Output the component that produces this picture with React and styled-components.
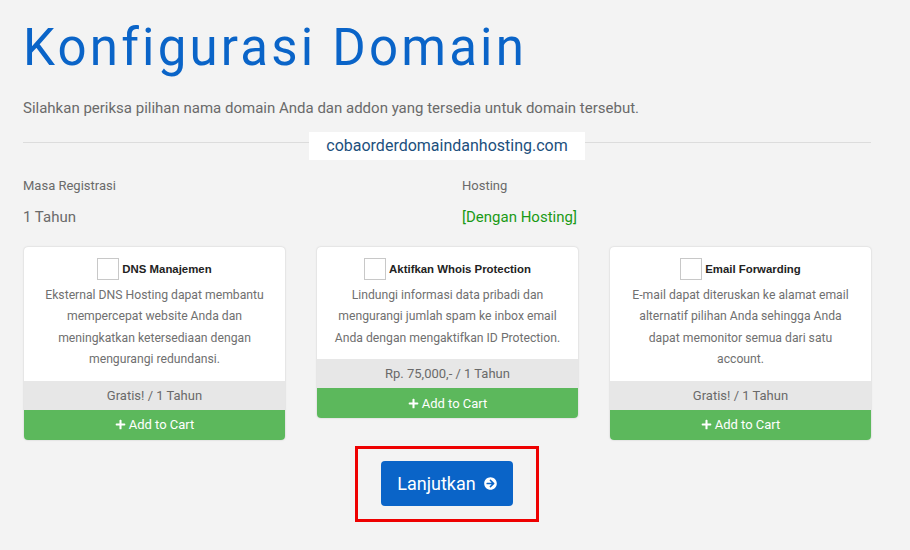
import React from "react";
import styled, { createGlobalStyle } from "styled-components";
import { FaPlus, FaArrowCircleRight } from "react-icons/fa";

const Global = createGlobalStyle`
  html, body {
    margin: 0;
    padding: 0;
    background: #f3f3f3;
    font-family: Roboto, "Liberation Sans", sans-serif;
  }
`;

const addons = [
  {
    name: "DNS Manajemen",
    desc: "Eksternal DNS Hosting dapat membantu mempercepat website Anda dan meningkatkan ketersediaan dengan mengurangi redundansi.",
    price: "Gratis! / 1 Tahun",
  },
  {
    name: "Aktifkan Whois Protection",
    desc: "Lindungi informasi data pribadi dan mengurangi jumlah spam ke inbox email Anda dengan mengaktifkan ID Protection.",
    price: "Rp. 75,000,- / 1 Tahun",
  },
  {
    name: "Email Forwarding",
    desc: "E-mail dapat diteruskan ke alamat email alternatif pilihan Anda sehingga Anda dapat memonitor semua dari satu account.",
    price: "Gratis! / 1 Tahun",
  },
];

const App = () => {
  return (
    <Page>
      <Global />
      <Title>Konfigurasi Domain</Title>
      <Lead>
        Silahkan periksa pilihan nama domain Anda dan addon yang tersedia untuk
        domain tersebut.
      </Lead>
      <Divider>
        <span>cobaorderdomaindanhosting.com</span>
      </Divider>
      <InfoRow>
        <div>
          <Label>Masa Registrasi</Label>
          <Value>1 Tahun</Value>
        </div>
        <div>
          <Label>Hosting</Label>
          <Value green>[Dengan Hosting]</Value>
        </div>
      </InfoRow>
      <Cards>
        {addons.map((a) => (
          <Card key={a.name}>
            <CardBody>
              <CardHead>
                <Check />
                <strong>{a.name}</strong>
              </CardHead>
              <Desc>{a.desc}</Desc>
            </CardBody>
            <Price>{a.price}</Price>
            <CartButton>
              <FaPlus className="icon" />
              Add to Cart
            </CartButton>
          </Card>
        ))}
      </Cards>
      <Footer>
        <Highlight>
          <Continue>
            Lanjutkan
            <FaArrowCircleRight className="icon" />
          </Continue>
        </Highlight>
      </Footer>
    </Page>
  );
};

const Page = styled.div`
  width: 848px;
  padding: 18px 0 0 23px;
  height: 532px;
`;

const Title = styled.h1`
  margin: 0;
  font-family: Roboto, sans-serif;
  font-weight: 400;
  font-size: 51px;
  letter-spacing: 3.2px;
  line-height: 60px;
  color: #0a64c8;
`;

const Lead = styled.p`
  margin: 20px 0 0;
  font-size: 15px;
  color: #6a6a6a;
  line-height: 20px;
`;

const Divider = styled.div`
  margin-top: 14px;
  display: flex;
  align-items: center;
  justify-content: center;
  height: 28px;
  background: linear-gradient(#dcdcdc, #dcdcdc) no-repeat 0 10px / 100% 1px;
  & span {
    background: #fff;
    padding: 0 17px;
    height: 28px;
    line-height: 28px;
    font-size: 16px;
    color: #1c4f7d;
  }
`;

const InfoRow = styled.div`
  display: grid;
  grid-template-columns: 439px 1fr;
  margin-top: 17px;
`;

const Label = styled.div`
  font-size: 13px;
  color: #6a6a6a;
  line-height: 18px;
`;

const Value = styled.div`
  margin-top: 12px;
  font-size: 15px;
  line-height: 20px;
  color: ${(p) => (p.green ? "#1a9a16" : "#6a6a6a")};
`;

const Cards = styled.div`
  display: grid;
  grid-template-columns: repeat(3, 261px);
  column-gap: 32px;
  align-items: start;
  margin-top: 20px;
  padding-left: 1px;
`;

const Card = styled.div`
  background: #fff;
  border-radius: 4px;
  overflow: hidden;
  box-shadow: 0 0 2px rgba(0, 0, 0, 0.2);
`;

const CardBody = styled.div`
  padding: 11px 8px 10px;
  text-align: center;
`;

const CardHead = styled.div`
  display: flex;
  justify-content: center;
  align-items: center;
  gap: 3px;
  & strong {
    font-family: "Liberation Sans", Arial, sans-serif;
    font-size: 11.4px;
    color: #222;
  }
`;

const Check = styled.span`
  display: inline-block;
  width: 20px;
  height: 20px;
  border: 1px solid #c8c8c8;
  background: #fff;
`;

const Desc = styled.p`
  margin: 5px 0 0;
  padding: 0 9px;
  font-size: 12.2px;
  line-height: 21.4px;
  color: #707070;
`;

const Price = styled.div`
  background: #e7e7e7;
  height: 29px;
  line-height: 29px;
  text-align: center;
  font-size: 13px;
  color: #6a6a6a;
`;

const CartButton = styled.div`
  background: #5cb85c;
  height: 30px;
  display: flex;
  align-items: center;
  justify-content: center;
  gap: 3px;
  color: #fff;
  font-size: 13px;
  & .icon {
    font-size: 11px;
  }
`;

const Footer = styled.div`
  display: flex;
  justify-content: center;
  margin-top: 6px;
`;

const Highlight = styled.div`
  border: 3px solid #e00;
  width: 178px;
  height: 70px;
  display: flex;
  justify-content: center;
  align-items: center;
`;

const Continue = styled.div`
  background: #0a64c8;
  border-radius: 4px;
  color: #fff;
  height: 45px;
  width: 132px;
  display: flex;
  align-items: center;
  justify-content: center;
  gap: 8px;
  font-size: 18px;
  & .icon {
    font-size: 13px;
  }
`;

export default App;
